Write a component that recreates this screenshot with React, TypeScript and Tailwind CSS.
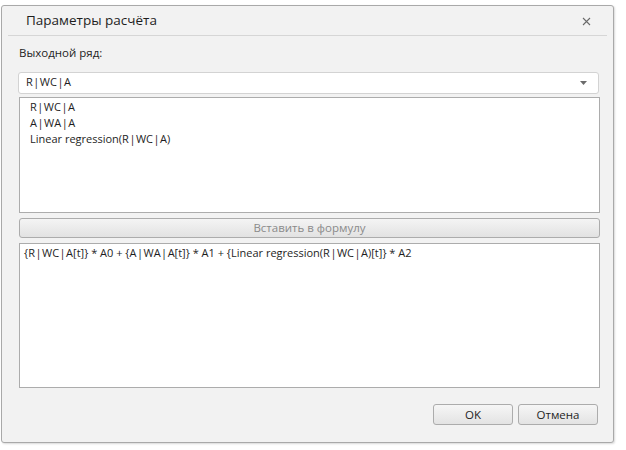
import React from 'react';

const items = ['R|WC|A', 'A|WA|A', 'Linear regression(R|WC|A)'];

function Spaced({ text }: { text: string }) {
  // pipes are drawn with a little air around them
  const parts = text.split('|');
  return (
    <>
      {parts.map((p, i) => (
        <React.Fragment key={i}>
          {i > 0 && <span className="mx-[0.5px]">|</span>}
          {p}
        </React.Fragment>
      ))}
    </>
  );
}

export default function App() {
  const formula = '{R|WC|A[t]} * A0 + {A|WA|A[t]} * A1 + {Linear regression(R|WC|A)[t]} * A2';

  return (
    <div
      className="w-[626px] h-[450px] bg-white pt-[5px] pl-[1px] overflow-hidden"
      style={{ fontFamily: '"Open Sans", "Noto Sans", sans-serif' }}
    >
      <div className="w-[613px] h-[438px] border border-[#a9a9a9] rounded-[3px] bg-[#f2f2f2] flex flex-col shadow-[1px_1px_2px_rgba(0,0,0,0.15)]">
        {/* header */}
        <div className="h-[29px] flex items-center justify-between pl-[24px] pr-[22px]">
          <span className="text-[13.5px] text-[#1e1e1e]">Параметры расчёта</span>
          <svg width="9" height="9" viewBox="0 0 9 9" className="mt-[1px]">
            <path d="M1 1 L8 8 M8 1 L1 8" stroke="#6a6a6a" strokeWidth="1.1" />
          </svg>
        </div>
        <div className="mx-[6px] h-px bg-[#d6d6d6]" />

        <div className="flex flex-col pl-[16px] pr-[14px]">
          <div className="mt-[9px] ml-[1px] h-[16px] flex items-center text-[11.5px] text-[#1e1e1e]">Выходной ряд:</div>

          {/* combo */}
          <div className="mt-[11px] h-[22px] w-[581px] border border-[#d3d3d3] rounded-[3px] bg-white flex items-center justify-between pl-[7px] pr-[11px]">
            <span className="text-[11px] text-[#1e1e1e] -mt-[1px]"><Spaced text="R|WC|A" /></span>
            <svg width="7" height="4" viewBox="0 0 7 4">
              <path d="M0 0 H7 L3.5 4 Z" fill="#6b6b6b" />
            </svg>
          </div>

          {/* list */}
          <div className="mt-[3px] ml-[1px] h-[116px] w-[581px] border border-[#acacac] bg-white pt-[1px] pl-[10px] flex flex-col">
            {items.map((it) => (
              <div key={it} className="h-[16px] flex items-center text-[11px] text-[#1e1e1e]">
                <Spaced text={it} />
              </div>
            ))}
          </div>

          {/* insert button */}
          <div className="mt-[5px] ml-[1px] h-[20px] w-[581px] border border-[#acacac] rounded-[3px] bg-gradient-to-b from-[#f4f4f4] to-[#e2e2e2] flex items-center justify-center text-[11.5px] text-[#8a8a8a]">
            Вставить в формулу
          </div>

          {/* formula */}
          <div className="mt-[5px] ml-[1px] h-[145px] w-[581px] border border-[#acacac] bg-white pt-[1px] pl-[4px]">
            <div className="h-[16px] flex items-center text-[11px] text-[#1e1e1e] whitespace-nowrap">
              <Spaced text={formula} />
            </div>
          </div>

          {/* footer */}
          <div className="mt-[16px] flex justify-end gap-[5px] pr-[1px]">
            <div className="w-[80px] h-[21px] border border-[#acacac] rounded-[3px] bg-gradient-to-b from-[#f6f6f6] to-[#e3e3e3] flex items-center justify-center text-[11.5px] text-[#1e1e1e]">
              OK
            </div>
            <div className="w-[80px] h-[21px] border border-[#acacac] rounded-[3px] bg-gradient-to-b from-[#f6f6f6] to-[#e3e3e3] flex items-center justify-center text-[11.5px] text-[#1e1e1e]">
              Отмена
            </div>
          </div>
        </div>
      </div>
    </div>
  );
}
